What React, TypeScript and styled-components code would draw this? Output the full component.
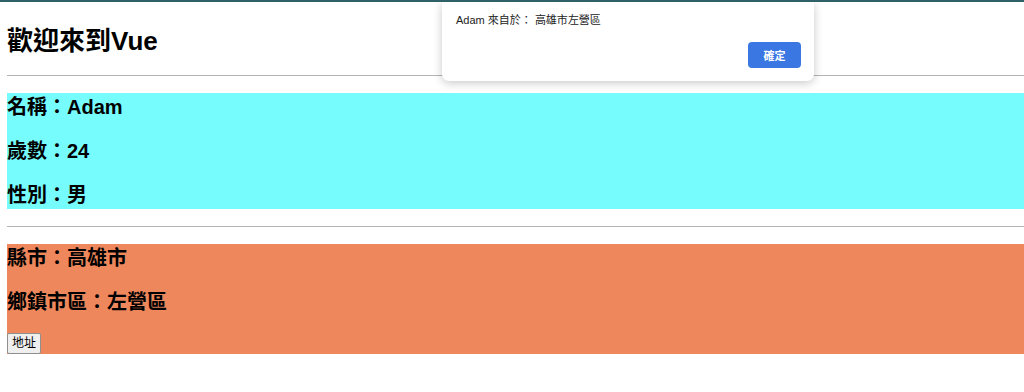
import styled, { createGlobalStyle } from "styled-components";

const GlobalStyle = createGlobalStyle`
  html, body {
    margin: 0;
    padding: 0;
    background: #fff;
  }
  body {
    font-family: "Liberation Sans", "Noto Sans CJK TC", sans-serif;
    color: #000;
  }
`;

const Page = styled.div`
  position: relative;
  width: 1024px;
  height: 392px;
  overflow: hidden;
  border-top: 2px solid #2f6169;
  box-sizing: border-box;
  padding-left: 7px;
`;

const Title = styled.h1`
  margin: 22px 0 0;
  font-size: 26px;
  line-height: 34px;
  font-weight: 700;
`;

const Divider = styled.hr`
  border: none;
  border-top: 1px solid #b4b4b4;
  height: 0;
  margin: 17px 0;
`;

const InfoBox = styled.section<{ $bg: string }>`
  display: flex;
  flex-direction: column;
  align-items: flex-start;
  gap: 16px;
  background: ${(p) => p.$bg};
`;

const Field = styled.h3`
  margin: 0;
  font-size: 20px;
  line-height: 28px;
  font-weight: 700;
`;

const PlainButton = styled.button`
  margin-top: 1px;
  font-family: inherit;
  font-size: 12px;
  line-height: 16px;
  padding: 1px 4px 2px;
  min-width: 34px;
  color: #000;
  background: #efefef;
  border: 1px solid #8f8f8f;
  border-radius: 2px;
`;

const Alert = styled.div`
  position: absolute;
  top: 0;
  left: 442px;
  width: 372px;
  height: 79px;
  box-sizing: border-box;
  background: #fff;
  border-radius: 0 0 7px 7px;
  box-shadow: 0 2px 10px rgba(0, 0, 0, 0.22);
  padding: 11px 13px 0 14px;
  display: flex;
  flex-direction: column;
`;

const AlertText = styled.p`
  margin: 0;
  font-size: 11px;
  line-height: 14px;
  color: #222;
`;

const AlertActions = styled.div`
  display: flex;
  justify-content: flex-end;
  margin-top: 15px;
`;

const OkButton = styled.button`
  width: 53px;
  height: 26px;
  border: none;
  border-radius: 4px;
  background: #3b77e2;
  color: #fff;
  font-family: inherit;
  font-size: 11px;
  font-weight: 700;
`;

export default function App() {
  const user = { name: "Adam", age: 24, gender: "男" };
  const addr = { city: "高雄市", district: "左營區" };

  return (
    <>
      <GlobalStyle />
      <Page lang="zh-TW">
        <Title>歡迎來到Vue</Title>
        <Divider />
        <InfoBox $bg="#77fcfe">
          <Field>名稱：{user.name}</Field>
          <Field>歲數：{user.age}</Field>
          <Field>性別：{user.gender}</Field>
        </InfoBox>
        <Divider />
        <InfoBox $bg="#ef875c">
          <Field>縣市：{addr.city}</Field>
          <Field>鄉鎮市區：{addr.district}</Field>
          <PlainButton type="button">地址</PlainButton>
        </InfoBox>

        <Alert role="alertdialog">
          <AlertText>
            {user.name} 來自於： {addr.city}
            {addr.district}
          </AlertText>
          <AlertActions>
            <OkButton type="button">確定</OkButton>
          </AlertActions>
        </Alert>
      </Page>
    </>
  );
}
